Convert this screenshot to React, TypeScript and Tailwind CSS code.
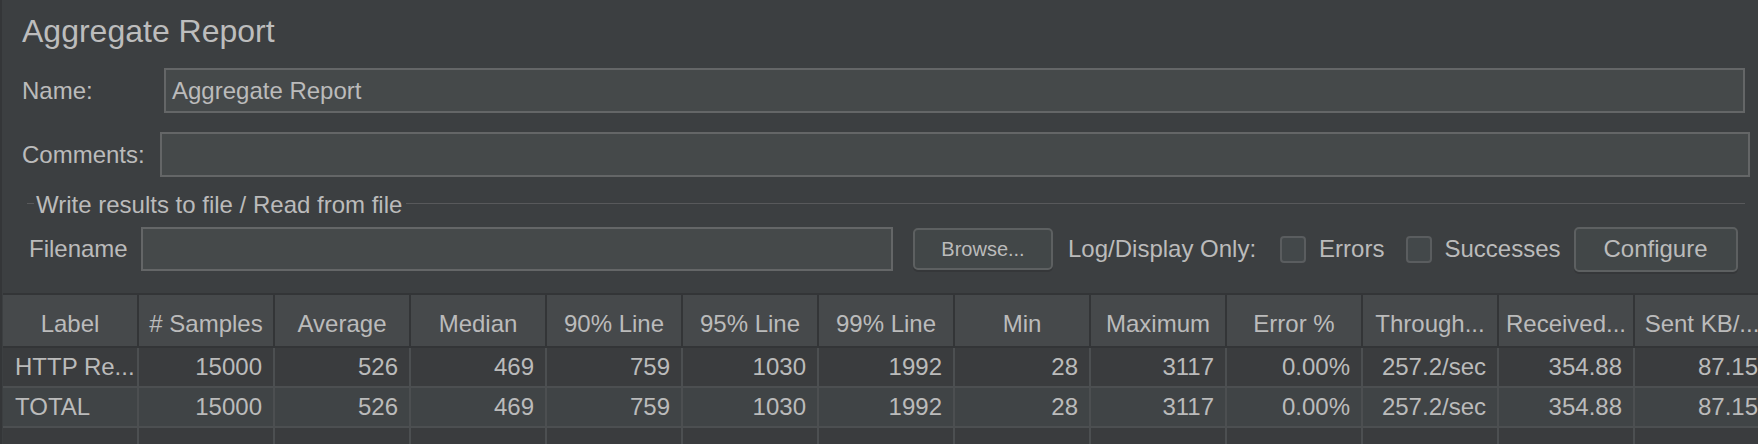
import { } from 'react'

const headers = [
  'Label', '# Samples', 'Average', 'Median', '90% Line', '95% Line', '99% Line',
  'Min', 'Maximum', 'Error %', 'Through...', 'Received...', 'Sent KB/...',
]

const rows = [
  ['HTTP Re...', '15000', '526', '469', '759', '1030', '1992', '28', '3117', '0.00%', '257.2/sec', '354.88', '87.15'],
  ['TOTAL', '15000', '526', '469', '759', '1030', '1992', '28', '3117', '0.00%', '257.2/sec', '354.88', '87.15'],
]

function Checkbox() {
  return <div className="w-[26px] h-[27px] rounded-[4px] border-2 border-[#5a5d5f] bg-[#43484a] shrink-0" />
}

export default function App() {
  return (
    <div className="w-[1758px] h-[444px] overflow-hidden bg-[#3c3f41] border-l-2 border-[#343638] text-[#bbbbbb] font-['Liberation_Sans',Arial,sans-serif]">
      <div className="pl-[20px]">
        {/* title */}
        <div className="pt-[15px] text-[32px] leading-[32px] text-[#bdbdbd]">Aggregate Report</div>

        {/* name */}
        <div className="flex items-center h-[45px] mt-[21px] pr-[13px]">
          <div className="w-[142px] shrink-0 text-[24px]">Name:</div>
          <div className="flex-1 h-full flex items-center bg-[#45494a] border-2 border-[#646667] pl-[6px] text-[24px]">
            Aggregate Report
          </div>
        </div>

        {/* comments */}
        <div className="flex items-center h-[45px] mt-[19px] pr-[8px]">
          <div className="w-[138px] shrink-0 text-[24px]">Comments:</div>
          <div className="flex-1 h-full bg-[#45494a] border-2 border-[#646667]" />
        </div>

        {/* titled border */}
        <div className="flex items-start h-[24px] mt-[16px] pr-[13px] text-[24px] leading-[24px]">
          <div className="ml-[5px] w-[7px] h-px mt-[10px] bg-[#58595b]" />
          <div className="ml-[2px]">Write results to file / Read from file</div>
          <div className="flex-1 ml-[4px] h-px mt-[10px] bg-[#58595b]" />
        </div>

        {/* file row */}
        <div className="flex items-center h-[44px] mt-[10px] text-[24px]">
          <div className="ml-[7px] w-[112px] shrink-0">Filename</div>
          <div className="w-[752px] h-full bg-[#45494a] border-2 border-[#646667] shrink-0" />
          <div className="ml-[20px] w-[140px] h-[42px] shrink-0 flex items-center justify-center rounded-[5px] border-2 border-[#5d6061] bg-[#424748] text-[20px] shadow-[0_2px_0_#353739]">
            Browse...
          </div>
          <div className="ml-[15px] shrink-0">Log/Display Only:</div>
          <div className="ml-[24px]"><Checkbox /></div>
          <div className="ml-[13px] shrink-0">Errors</div>
          <div className="ml-[22px]"><Checkbox /></div>
          <div className="ml-[12px] shrink-0">Successes</div>
          <div className="ml-[13px] w-[164px] h-[45px] shrink-0 flex items-center justify-center rounded-[5px] border-2 border-[#5d6061] bg-[#424748] shadow-[0_2px_0_#353739]">
            Configure
          </div>
        </div>
      </div>

      {/* table */}
      <div className="mt-[22px] ml-px w-[1768px] border-t-2 border-[#333537] text-[24px]">
        <div className="grid grid-cols-[repeat(13,136px)] bg-[#46494b]">
          {headers.map(h => (
            <div key={h} className="h-[53px] pt-[7px] flex items-center justify-center border-r-2 border-b-2 border-[#333537] whitespace-nowrap overflow-hidden">
              {h}
            </div>
          ))}
        </div>
        {rows.map((r, ri) => (
          <div key={ri} className={`grid grid-cols-[repeat(13,136px)] ${ri === 1 ? 'bg-[#404446]' : 'bg-[#3a3c3e]'}`}>
            {r.map((c, ci) => (
              <div
                key={ci}
                className={`h-[40px] flex items-center border-r-2 border-b-2 border-[#4c4f51] whitespace-nowrap overflow-hidden ${ci === 0 ? 'pl-[12px] justify-start' : 'pr-[11px] justify-end'}`}
              >
                {c}
              </div>
            ))}
          </div>
        ))}
        <div className="grid grid-cols-[repeat(13,136px)] bg-[#3a3c3e]">
          {headers.map(h => (
            <div key={h} className="h-[40px] border-r-2 border-[#4c4f51]" />
          ))}
        </div>
      </div>
    </div>
  )
}
